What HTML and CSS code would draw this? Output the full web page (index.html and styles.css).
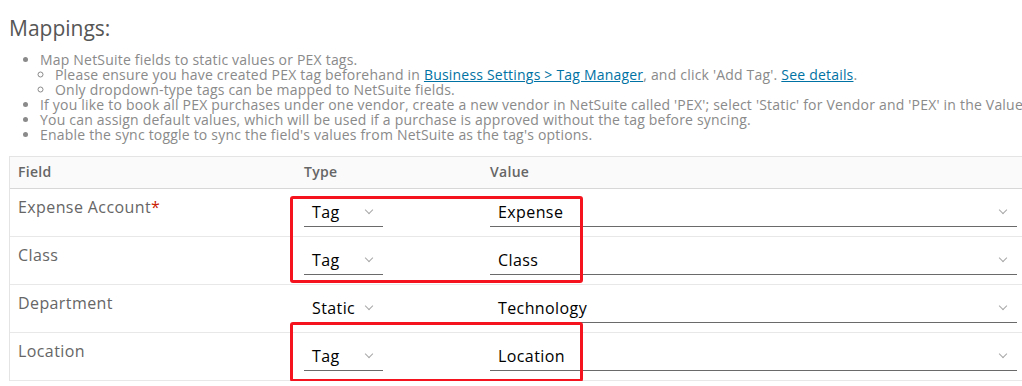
FILE: index.html
```html
<!DOCTYPE html>
<html lang="en">
<head>
  <meta charset="UTF-8">
  <title>Mappings</title>
  <link rel="stylesheet" href="styles.css">
</head>
<body>
  <div class="page">
    <h2 class="title">Mappings:</h2>
    <ul class="notes">
      <li>Map NetSuite fields to static values or PEX tags.
        <ul>
          <li>Please ensure you have created PEX tag beforehand in <a href="#">Business Settings &gt; Tag Manager</a>, and click 'Add Tag'. <a href="#">See details</a>.</li>
          <li>Only dropdown-type tags can be mapped to NetSuite fields.</li>
        </ul>
      </li>
      <li>If you like to book all PEX purchases under one vendor, create a new vendor in NetSuite called 'PEX'; select 'Static' for Vendor and 'PEX' in the Value field.</li>
      <li>You can assign default values, which will be used if a purchase is approved without the tag before syncing.</li>
      <li>Enable the sync toggle to sync the field's values from NetSuite as the tag's options.</li>
    </ul>

    <div class="grid">
      <div class="row head">
        <div class="cell">Field</div>
        <div class="cell">Type</div>
        <div class="cell">Value</div>
      </div>
      <div class="row">
        <div class="cell field">Expense Account<span class="req">*</span></div>
        <div class="cell"><div class="select type">Tag<span class="chev"></span></div></div>
        <div class="cell"><div class="select value">Expense<span class="chev"></span></div></div>
      </div>
      <div class="row">
        <div class="cell field">Class</div>
        <div class="cell"><div class="select type">Tag<span class="chev"></span></div></div>
        <div class="cell"><div class="select value">Class<span class="chev"></span></div></div>
      </div>
      <div class="row">
        <div class="cell field">Department</div>
        <div class="cell"><div class="select type">Static<span class="chev"></span></div></div>
        <div class="cell"><div class="select value">Technology<span class="chev"></span></div></div>
      </div>
      <div class="row">
        <div class="cell field">Location</div>
        <div class="cell"><div class="select type">Tag<span class="chev"></span></div></div>
        <div class="cell"><div class="select value">Location<span class="chev"></span></div></div>
      </div>

      <!-- ramki zaznaczenia nad tabelą -->
      <div class="mark mark-top"></div>
      <div class="mark mark-bottom"></div>
    </div>
  </div>
</body>
</html>
```

FILE: styles.css
```css
body {
  margin: 0;
  font-family: 'Open Sans', sans-serif;
  background-color: #fff;
  overflow: hidden;
}
.page {
  padding: 0 0 0 9px;
  width: 1100px;
}
.title {
  margin: 0;
  padding-top: 14px;
  font-size: 21px;
  font-weight: 400;
  line-height: 28px;
  color: #565656;
}
.notes {
  margin: 10px 0 0 0;
  padding-left: 31px;
  font-size: 14px;
  letter-spacing: 0.2px;
  line-height: 15px;
  color: #8a8a8a;
  white-space: nowrap;
}
.notes ul {
  margin: 0;
  padding-left: 15px;
  list-style-type: circle;
}
.notes a {
  color: #0072a3;
}

/* Tabela mapowań */
.grid {
  position: relative;
  margin-top: 14px;
  border-top: 1px solid #e4e4e4;
  border-left: 1px solid #e4e4e4;
}
.row {
  display: grid;
  grid-template-columns: 286px 186px 1fr;
  height: 48px;
  border-bottom: 1px solid #e8e8e8;
  box-sizing: border-box;
}
.row.head {
  height: 32px;
  background-color: #fafafa;
  border-bottom: 1px solid #d7d7d7;
}
.head .cell {
  font-size: 14px;
  font-weight: 600;
  letter-spacing: 0.3px;
  color: #666;
  line-height: 30px;
}
.cell {
  padding-left: 8px;
}
.field {
  padding-top: 7px;
  font-size: 16px;
  letter-spacing: 0.4px;
  line-height: 22px;
  color: #666;
}
.req {
  color: #c92100;
}
.select {
  position: relative;
  margin-top: 12px;
  height: 25px;
  padding-left: 8px;
  border-bottom: 1px solid #6a6a6a;
  font-size: 16px;
  letter-spacing: 0.4px;
  line-height: 22px;
  color: #000;
}
.select.type {
  width: 71px;
}
.select.value {
  width: 519px;
}
.chev {
  position: absolute;
  right: 11px;
  top: 6px;
  width: 5px;
  height: 5px;
  border-right: 1px solid #a8a8a8;
  border-bottom: 1px solid #a8a8a8;
  transform: rotate(45deg);
}
.mark {
  position: absolute;
  left: 280px;
  width: 293px;
  border: 3px solid #f5141e;
  border-radius: 3px;
  box-sizing: border-box;
}
.mark-top {
  top: 39px;
  height: 87px;
}
.mark-bottom {
  top: 165px;
  height: 60px;
}
```
